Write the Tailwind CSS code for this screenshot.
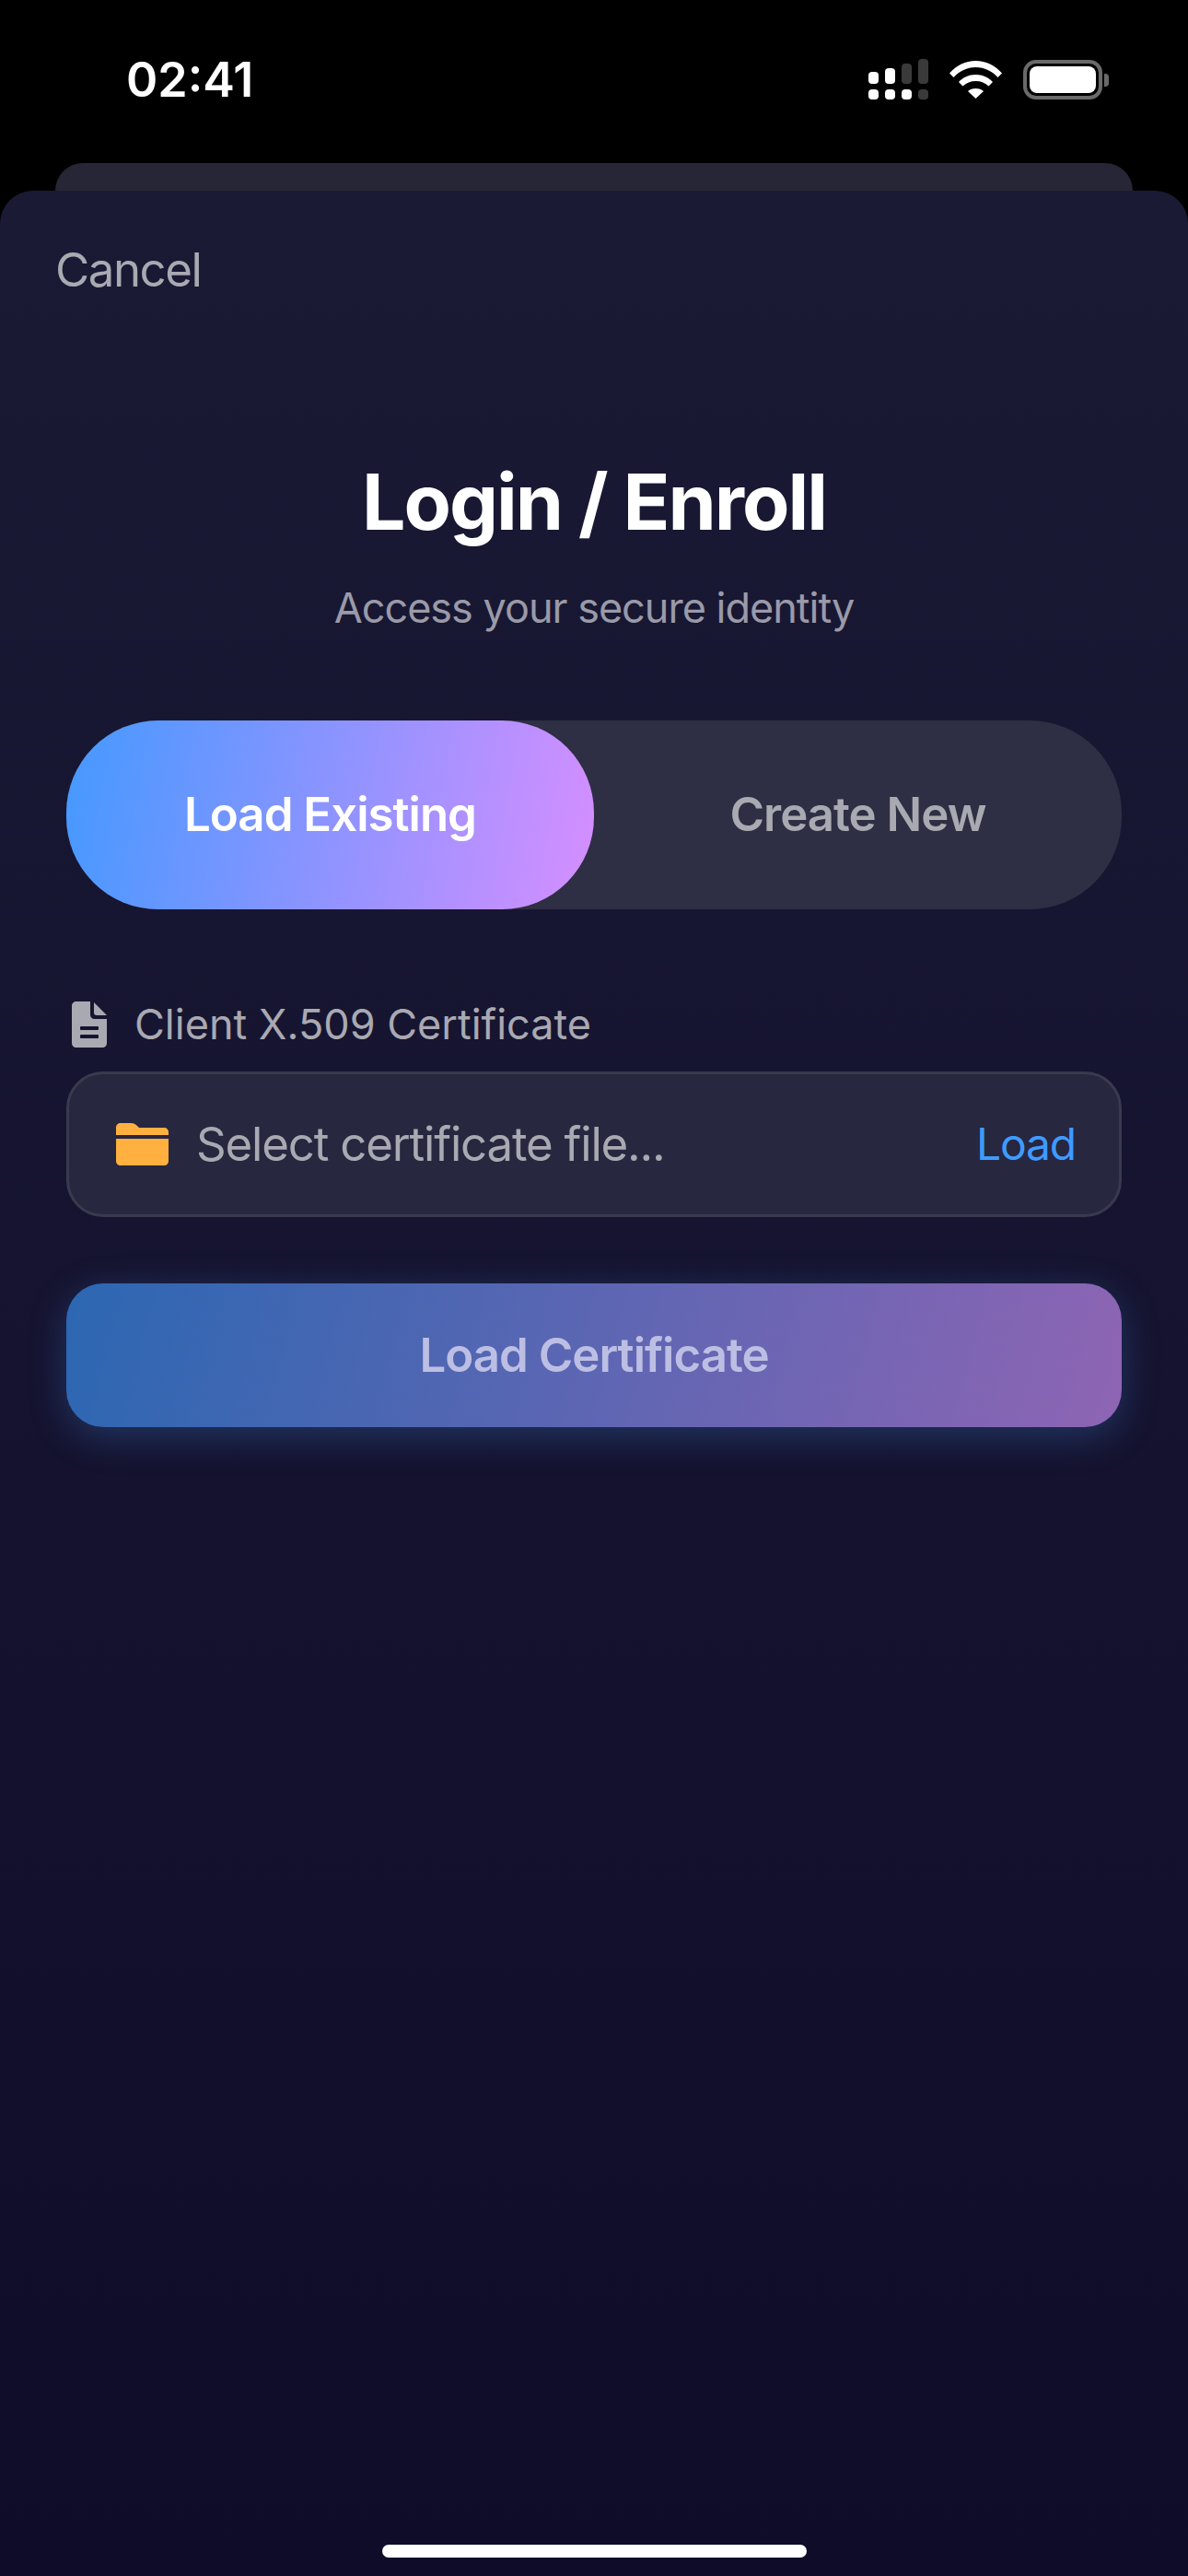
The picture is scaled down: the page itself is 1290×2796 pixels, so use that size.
<!DOCTYPE html>
<html lang="en">
<head>
  <meta charset="UTF-8" />
  <meta name="viewport" content="width=device-width, initial-scale=1.0"/>
  <title>Login / Enroll</title>
  <script src="https://cdn.jsdelivr.net/npm/@tailwindcss/browser@4"></script>
</head>
<body class="bg-black h-[2796px] w-[1290px] overflow-hidden [font-family:Inter,sans-serif] text-white">

  <!-- Status bar -->
  <div class="h-[177px] flex items-start justify-between pl-[137px] pr-[86px]">
    <span class="mt-[55px] text-[52px] leading-[64px] font-semibold">02:41</span>
    <div class="flex items-start mt-[64px]">
      <!-- Signal -->
      <svg width="65" height="44" viewBox="0 0 65 44" fill="#fff">
        <rect x="0" y="14" width="11" height="13" rx="4"/>
        <rect x="18" y="10" width="11" height="17" rx="4"/>
        <rect x="36" y="5" width="11" height="22" rx="4" fill="#3a3a3a"/>
        <rect x="54" y="0" width="11" height="27" rx="4" fill="#3a3a3a"/>
        <rect x="0" y="33" width="11" height="11" rx="4"/>
        <rect x="18" y="33" width="11" height="11" rx="4"/>
        <rect x="36" y="33" width="11" height="11" rx="4"/>
        <rect x="54" y="33" width="11" height="11" rx="4" fill="#3a3a3a"/>
      </svg>
      <!-- Wifi -->
      <svg class="ml-[23px] mt-[2px]" width="57" height="41" viewBox="0 0 57 41" fill="#fff">
        <path d="M0 13.5C7.5 5 17.5 0 28.500 0S49.500 5 57 13.500L52.500 18C46 11 38 7 28.500 7S11 11 4.500 18Z"/>
        <path d="M10 23C14.500 18 21 15 28.500 15S42.500 18 47 23L42.500 27.500C39 24 34 22 28.500 22S18 24 14.500 27.500Z"/>
        <path d="M20 33C22 31 25 30 28.500 30S35 31 37 33L28.500 41Z"/>
      </svg>
      <!-- Battery -->
      <div class="ml-[23px] mt-[1px] flex items-center">
        <div class="w-[86px] h-[43px] rounded-[14px] border-[4px] border-[#6a6a6a] p-[3px]">
          <div class="w-full h-full rounded-[8px] bg-white"></div>
        </div>
        <div class="ml-[2px] w-[5px] h-[14px] rounded-r-[4px] bg-[#6a6a6a]"></div>
      </div>
    </div>
  </div>

  <!-- Card behind the sheet -->
  <div class="h-[30px] mx-[60px] rounded-t-[30px] bg-[#262636]"></div>

  <!-- Sheet -->
  <div class="h-[2589px] rounded-t-[36px] bg-gradient-to-b from-[#1a1a35] via-[#15132f] to-[#0f0c29] flex flex-col">
    <div class="pl-[60px] pt-[55px]">
      <span class="text-[51px] leading-[62px] tracking-[-1.5px] text-[#a9a9b1]">Cancel</span>
    </div>

    <h1 class="mt-[171px] text-center text-[84px] leading-[100px] font-bold tracking-[-2px]">Login / Enroll</h1>
    <p class="mt-[37px] text-center text-[45px] leading-[56px] tracking-[-1px] text-[#9a9aa8]">Access your secure identity</p>

    <div class="mx-[72px] mt-[94px] flex flex-col">
      <!-- Segmented control -->
      <div class="h-[205px] rounded-[100px] bg-[#2e2e44] flex">
        <div class="w-[573px] rounded-[100px] bg-[linear-gradient(100deg,#4499ff,#d68eff)] flex items-center justify-center text-[51px] font-semibold tracking-[-1px]">Load Existing</div>
        <div class="flex-1 flex items-center justify-center text-[51px] font-semibold tracking-[-1px] text-[#a9a9b1]">Create New</div>
      </div>

      <!-- Certificate field -->
      <div class="mt-[100px] flex items-center pl-[6px]">
        <svg width="38" height="50" viewBox="0 0 38 50" fill="#a9a9b1">
          <path d="M5 0H20V14C20 17 22 19 25 19H38V45C38 48 36 50 33 50H5C2 50 0 48 0 45V5C0 2 2 0 5 0Z"/>
          <path d="M24 1L38 15H27C25 15 24 14 24 12Z"/>
          <rect x="9" y="27" width="20" height="4" rx="1" fill="#15132f"/>
          <rect x="9" y="36" width="20" height="4" rx="1" fill="#15132f"/>
        </svg>
        <span class="ml-[30px] text-[45px] leading-[50px] text-[#a9a9b1]">Client X.509 Certificate</span>
      </div>

      <div class="mt-[26px] h-[158px] rounded-[40px] bg-[#272740] border-[3px] border-[#3a3a4f] flex items-center pl-[51px] pr-[47px]">
        <svg width="57" height="46" viewBox="0 0 57 46" fill="#ffb03f">
          <path d="M0 5C0 2 2 0 5 0H16C19 0 21 1 23 3L25 5H52C55 5 57 7 57 10V13H0Z"/>
          <path d="M0 17H57V41C57 44 55 46 52 46H5C2 46 0 44 0 41Z"/>
        </svg>
        <span class="ml-[30px] flex-1 text-[51px] tracking-[-1.2px] text-[#a9a9b1]">Select certificate file...</span>
        <span class="text-[48px] tracking-[-1.2px] text-[#3f9bff]">Load</span>
      </div>

      <!-- Submit -->
      <div class="mt-[72px] h-[156px] rounded-[40px] bg-[linear-gradient(105deg,#2c67b2,#8e65b4)] shadow-[0_10px_40px_rgba(74,158,255,0.25)] flex items-center justify-center text-[51px] font-semibold tracking-[-1px] text-[#bcbfe3]">Load Certificate</div>
    </div>

    <!-- Home indicator -->
    <div class="mt-auto mb-[20px] mx-auto w-[461px] h-[14px] rounded-full bg-white"></div>
  </div>
</body>
</html>
